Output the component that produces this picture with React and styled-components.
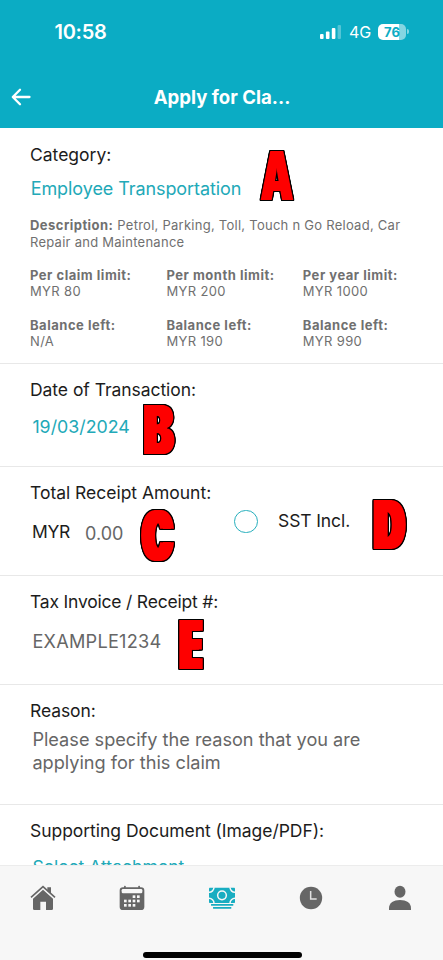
import React, { useState } from "react";
import styled, { createGlobalStyle } from "styled-components";

const limits = [
  { title: "Per claim limit:", value: "MYR 80", left: "N/A" },
  { title: "Per month limit:", value: "MYR 200", left: "MYR 190" },
  { title: "Per year limit:", value: "MYR 1000", left: "MYR 990" },
];

// *********ICONS***************

const HomeIcon = () => (
  <TabIcon viewBox="0 0 78 78">
    <path d="M52 7h11v20l-11-9z" />
    <path
      d="M3 37 39 5l36 32"
      fill="none"
      stroke="currentColor"
      strokeWidth="5"
    />
    <path d="M39 14 69 41v30a4 4 0 0 1-4 4H48V50H31v25H13a4 4 0 0 1-4-4V41z" />
  </TabIcon>
);

const CalendarIcon = () => (
  <TabIcon viewBox="0 0 78 78">
    <rect x="15" y="2" width="5" height="9" rx="2" />
    <rect x="58" y="2" width="5" height="9" rx="2" />
    <rect x="2" y="7" width="74" height="68" rx="10" />
    <g fill="#f7f7f7">
      <rect x="8" y="12" width="62" height="13" rx="4" />
      {[
        [45, 35],
        [58, 35],
        [19, 48],
        [32, 48],
        [45, 48],
        [58, 48],
        [19, 61],
        [32, 61],
        [45, 61],
      ].map(([x, y]) => (
        <rect key={`${x}-${y}`} x={x - 4} y={y - 4} width="8" height="8" />
      ))}
    </g>
  </TabIcon>
);

const CashIcon = () => (
  <TabIcon viewBox="0 0 78 78" $active>
    <rect x="0" y="8" width="78" height="46" rx="2" />
    <g fill="none" stroke="#f7f7f7" strokeWidth="4.5">
      <circle cx="39" cy="31" r="13" />
      <path d="M0 22a15 15 0 0 0 15-15M78 22A15 15 0 0 1 63 7M0 40a15 15 0 0 1 15 15M78 40a15 15 0 0 0-15 15" />
    </g>
    <rect x="6" y="57" width="67" height="5" rx="1" />
    <rect x="12" y="66" width="55" height="5" rx="1" />
  </TabIcon>
);

const ClockIcon = () => (
  <TabIcon viewBox="0 0 78 78">
    <circle cx="39" cy="39" r="33.5" />
    <path d="M38 18v24h18" fill="none" stroke="#e2e2e2" strokeWidth="4.5" />
  </TabIcon>
);

const PersonIcon = () => (
  <TabIcon viewBox="0 0 78 78">
    <ellipse cx="39" cy="20" rx="16.5" ry="18" />
    <path d="M6 75v-5c0-17 14-25 33-25s33 8 33 25v5z" />
  </TabIcon>
);

export default function App() {
  const [sst, setSst] = useState(false);

  return (
    <Screen>
      <GlobalStyle />
      <Header>
        <StatusBar>
          <Time>10:58</Time>
          <Signal viewBox="0 0 21 14">
            <rect x="0" y="9" width="3.6" height="5" rx="1" />
            <rect x="5.9" y="6.5" width="3.6" height="7.5" rx="1" />
            <rect x="11.8" y="3" width="3.6" height="11" rx="1" />
            <rect x="17.6" y="0" width="3.4" height="14" rx="1" opacity="0.3" />
          </Signal>
          <Network>4G</Network>
          <Battery>76</Battery>
          <BatteryNub />
        </StatusBar>
        <NavBar>
          <BackButton type="button" aria-label="Back">
            <svg width="20" height="18" viewBox="0 0 20 18" fill="none">
              <path
                d="M18.5 9H2.2M9 1.8 1.8 9 9 16.2"
                stroke="#fff"
                strokeWidth="2.3"
                strokeLinecap="round"
                strokeLinejoin="round"
              />
            </svg>
          </BackButton>
          <Title>Apply for Cla...</Title>
          <span />
        </NavBar>
      </Header>

      <Form>
        <Section $height={236} $top={16}>
          <Label>Category:</Label>
          <Value $gap={11.5} $link $indent={0.7} $spacing={-0.08}>
            Employee Transportation
          </Value>
          <Description>
            <b>Description:</b> Petrol, Parking, Toll, Touch n Go Reload, Car
            <br />
            Repair and Maintenance
          </Description>
          <Limits>
            {limits.map((item) => (
              <Limit key={item.title}>
                <b>{item.title}</b>
                <span>{item.value}</span>
                <b>Balance left:</b>
                <span>{item.left}</span>
              </Limit>
            ))}
          </Limits>
          <Marker $x={261} $y={21.5} $width={33} $scale={0.6} $grow={1}>
            <span>A</span>
          </Marker>
        </Section>

        <Section $height={103} $top={15}>
          <Label $spacing={-0.05}>Date of Transaction:</Label>
          <Value $gap={14.5} $link $size={17.8}>
            19/03/2024
          </Value>
          <Marker $x={142.5} $y={40} $width={31.5} $scale={0.65} $grow={2}>
            <span>B</span>
          </Marker>
        </Section>

        <Section $height={109} $top={15}>
          <Split>
            <div>
              <Label $spacing={-0.02}>Total Receipt Amount:</Label>
              <Amount>
                <Currency>MYR</Currency>
                <Value as="span">0.00</Value>
              </Amount>
            </div>
            <Option onClick={() => setSst(!sst)}>
              <Radio $checked={sst} />
              <Label as="span" $spacing={-0.1}>
                SST Incl.
              </Label>
            </Option>
          </Split>
          <Marker $x={141} $y={43} $width={32} $scale={0.58} $grow={3}>
            <span>C</span>
          </Marker>
          <Marker $x={373.5} $y={32} $width={32} $scale={0.6} $grow={3}>
            <span>D</span>
          </Marker>
        </Section>

        <Section $height={109} $top={15}>
          <Label $spacing={-0.2}>Tax Invoice / Receipt #:</Label>
          <Value $gap={17.3} $size={18.15} $spacing={0.25}>
            EXAMPLE1234
          </Value>
          <Marker $x={179.5} $y={43} $width={23.5} $scale={0.49} $grow={3}>
            <span>E</span>
          </Marker>
        </Section>

        <Section $height={120} $top={14.5}>
          <Label $spacing={-0.08}>Reason:</Label>
          <Value $gap={6} $size={18.15} $line={23}>
            Please specify the reason that you are
            <br />
            applying for this claim
          </Value>
        </Section>

        <Section $height={90} $top={15}>
          <Label $spacing={-0.04}>Supporting Document (Image/PDF):</Label>
          <Value $gap={14} $link $size={17.6}>
            Select Attachment
          </Value>
        </Section>
      </Form>

      <TabBar>
        <Tabs>
          <HomeIcon />
          <CalendarIcon />
          <CashIcon />
          <ClockIcon />
          <PersonIcon />
        </Tabs>
        <HomeIndicator />
      </TabBar>
    </Screen>
  );
}

// *********STYLES***************

const GlobalStyle = createGlobalStyle`
  * {
    box-sizing: border-box;
  }
  body {
    margin: 0;
    background: #fff;
    font-family: Inter, "Liberation Sans", sans-serif;
  }
`;

const Screen = styled.div`
  display: flex;
  flex-direction: column;
  width: 443px;
  height: 960px;
  overflow: hidden;
  background: #fff;
`;

const Header = styled.header`
  flex: none;
  height: 128px;
  background: #0bacc4;
  color: #fff;
`;

const StatusBar = styled.div`
  display: flex;
  align-items: center;
  height: 66px;
  padding: 0 34px 3px 54.5px;
`;

const Time = styled.span`
  flex: 1;
  font-size: 20px;
  font-weight: 600;
  line-height: 24px;
  letter-spacing: -0.3px;
`;

const Signal = styled.svg`
  width: 21px;
  height: 14px;
  margin: 1px 8.5px 0 0;
  fill: #fff;
`;

const Network = styled.span`
  width: 29px;
  font-size: 16px;
  line-height: 20px;
`;

const Battery = styled.span`
  width: 28px;
  height: 16px;
  border-radius: 5px;
  background: linear-gradient(
    to right,
    #fff 0 76%,
    rgba(255, 255, 255, 0.5) 76%
  );
  color: #0bacc4;
  font-size: 13px;
  font-weight: 700;
  line-height: 16px;
  text-align: center;
`;

const BatteryNub = styled.span`
  width: 2px;
  height: 5px;
  margin-left: 1px;
  border-radius: 0 2px 2px 0;
  background: rgba(255, 255, 255, 0.5);
`;

const NavBar = styled.div`
  display: grid;
  grid-template-columns: 60px 1fr 59px;
  align-items: center;
  height: 62px;
`;

const BackButton = styled.button`
  display: flex;
  padding: 0 0 0 11px;
  border: none;
  background: none;
  cursor: pointer;
`;

const Title = styled.h1`
  margin: 0;
  font-size: 18.6px;
  font-weight: 700;
  line-height: 24px;
  text-align: center;
`;

const Form = styled.main`
  flex: 1;
  min-height: 0;
  overflow: hidden;
`;

const Section = styled.section`
  position: relative;
  height: ${(p) => p.$height}px;
  padding: ${(p) => p.$top}px 29px 0 30px;
  border-bottom: 1px solid #e8e8e8;
`;

const Label = styled.div`
  color: #1c1c1c;
  font-size: 17.5px;
  line-height: 22px;
  letter-spacing: ${(p) => p.$spacing || 0}px;
  white-space: nowrap;
`;

const Value = styled.div`
  margin: ${(p) => p.$gap || 0}px 0 0 ${(p) => p.$indent ?? 2.4}px;
  color: ${(p) => (p.$link ? "#22a9b8" : "#666")};
  font-size: ${(p) => p.$size || 18}px;
  line-height: ${(p) => p.$line || 22}px;
  letter-spacing: ${(p) => p.$spacing || 0}px;
  white-space: nowrap;
`;

const Description = styled.p`
  margin: 17.6px 0 0;
  color: #707070;
  font-size: 13px;
  line-height: 16.4px;
  letter-spacing: 0.26px;
  white-space: nowrap;
  b {
    letter-spacing: 0.46px;
  }
`;

const Limits = styled.div`
  display: grid;
  grid-template-columns: repeat(3, 136.4px);
  margin-top: 17px;
`;

const Limit = styled.div`
  display: flex;
  flex-direction: column;
  color: #707070;
  font-size: 13px;
  line-height: 16.4px;
  letter-spacing: 0.35px;
  b {
    letter-spacing: 0.52px;
  }
  span + b {
    margin-top: 17px;
  }
`;

const Split = styled.div`
  display: grid;
  grid-template-columns: 204px 1fr;
`;

const Amount = styled.div`
  display: flex;
  padding: 17px 0 0 2px;
  ${Value} {
    margin: 1.5px 0 0 14.5px;
  }
`;

const Currency = styled.span`
  width: 38.5px;
  color: #1c1c1c;
  font-size: 17.5px;
  line-height: 22px;
  letter-spacing: -0.4px;
`;

const Option = styled.div`
  display: flex;
  gap: 20.5px;
  padding-top: 27.5px;
  cursor: pointer;
`;

const Radio = styled.span`
  width: 23.5px;
  height: 23.5px;
  border: 1.5px solid #27afbd;
  border-radius: 50%;
  background: ${(p) => (p.$checked ? "#27afbd" : "transparent")};
`;

// red letters pinned over the form, the filters widen and outline them
const Marker = styled.div`
  position: absolute;
  left: ${(p) => p.$x}px;
  top: ${(p) => p.$y}px;
  display: flex;
  justify-content: center;
  width: ${(p) => p.$width}px;
  height: 50px;
  color: #fe0000;
  font-size: 68px;
  font-weight: 900;
  line-height: 50px;
  filter: drop-shadow(${(p) => p.$grow}px 0 #fe0000)
    drop-shadow(-${(p) => p.$grow}px 0 #fe0000) drop-shadow(1px 0 #000)
    drop-shadow(-1px 0 #000) drop-shadow(0 1px #000) drop-shadow(0 -1px #000);
  span {
    transform: scaleX(${(p) => p.$scale});
  }
`;

const TabBar = styled.nav`
  display: flex;
  flex: none;
  flex-direction: column;
  justify-content: space-between;
  align-items: center;
  height: 95px;
  padding: 19.3px 0 2px;
  border-top: 1px solid #ececec;
  background: #f7f7f7;
`;

const Tabs = styled.div`
  display: grid;
  grid-template-columns: repeat(5, 89.3px);
  width: 100%;
  padding-left: 30px;
`;

const TabIcon = styled.svg`
  width: 26px;
  height: 26px;
  color: ${(p) => (p.$active ? "#18adc1" : "#666")};
  fill: currentColor;
`;

const HomeIndicator = styled.div`
  width: 159px;
  height: 6px;
  margin-left: 2px;
  border-radius: 3px;
  background: #000;
`;
